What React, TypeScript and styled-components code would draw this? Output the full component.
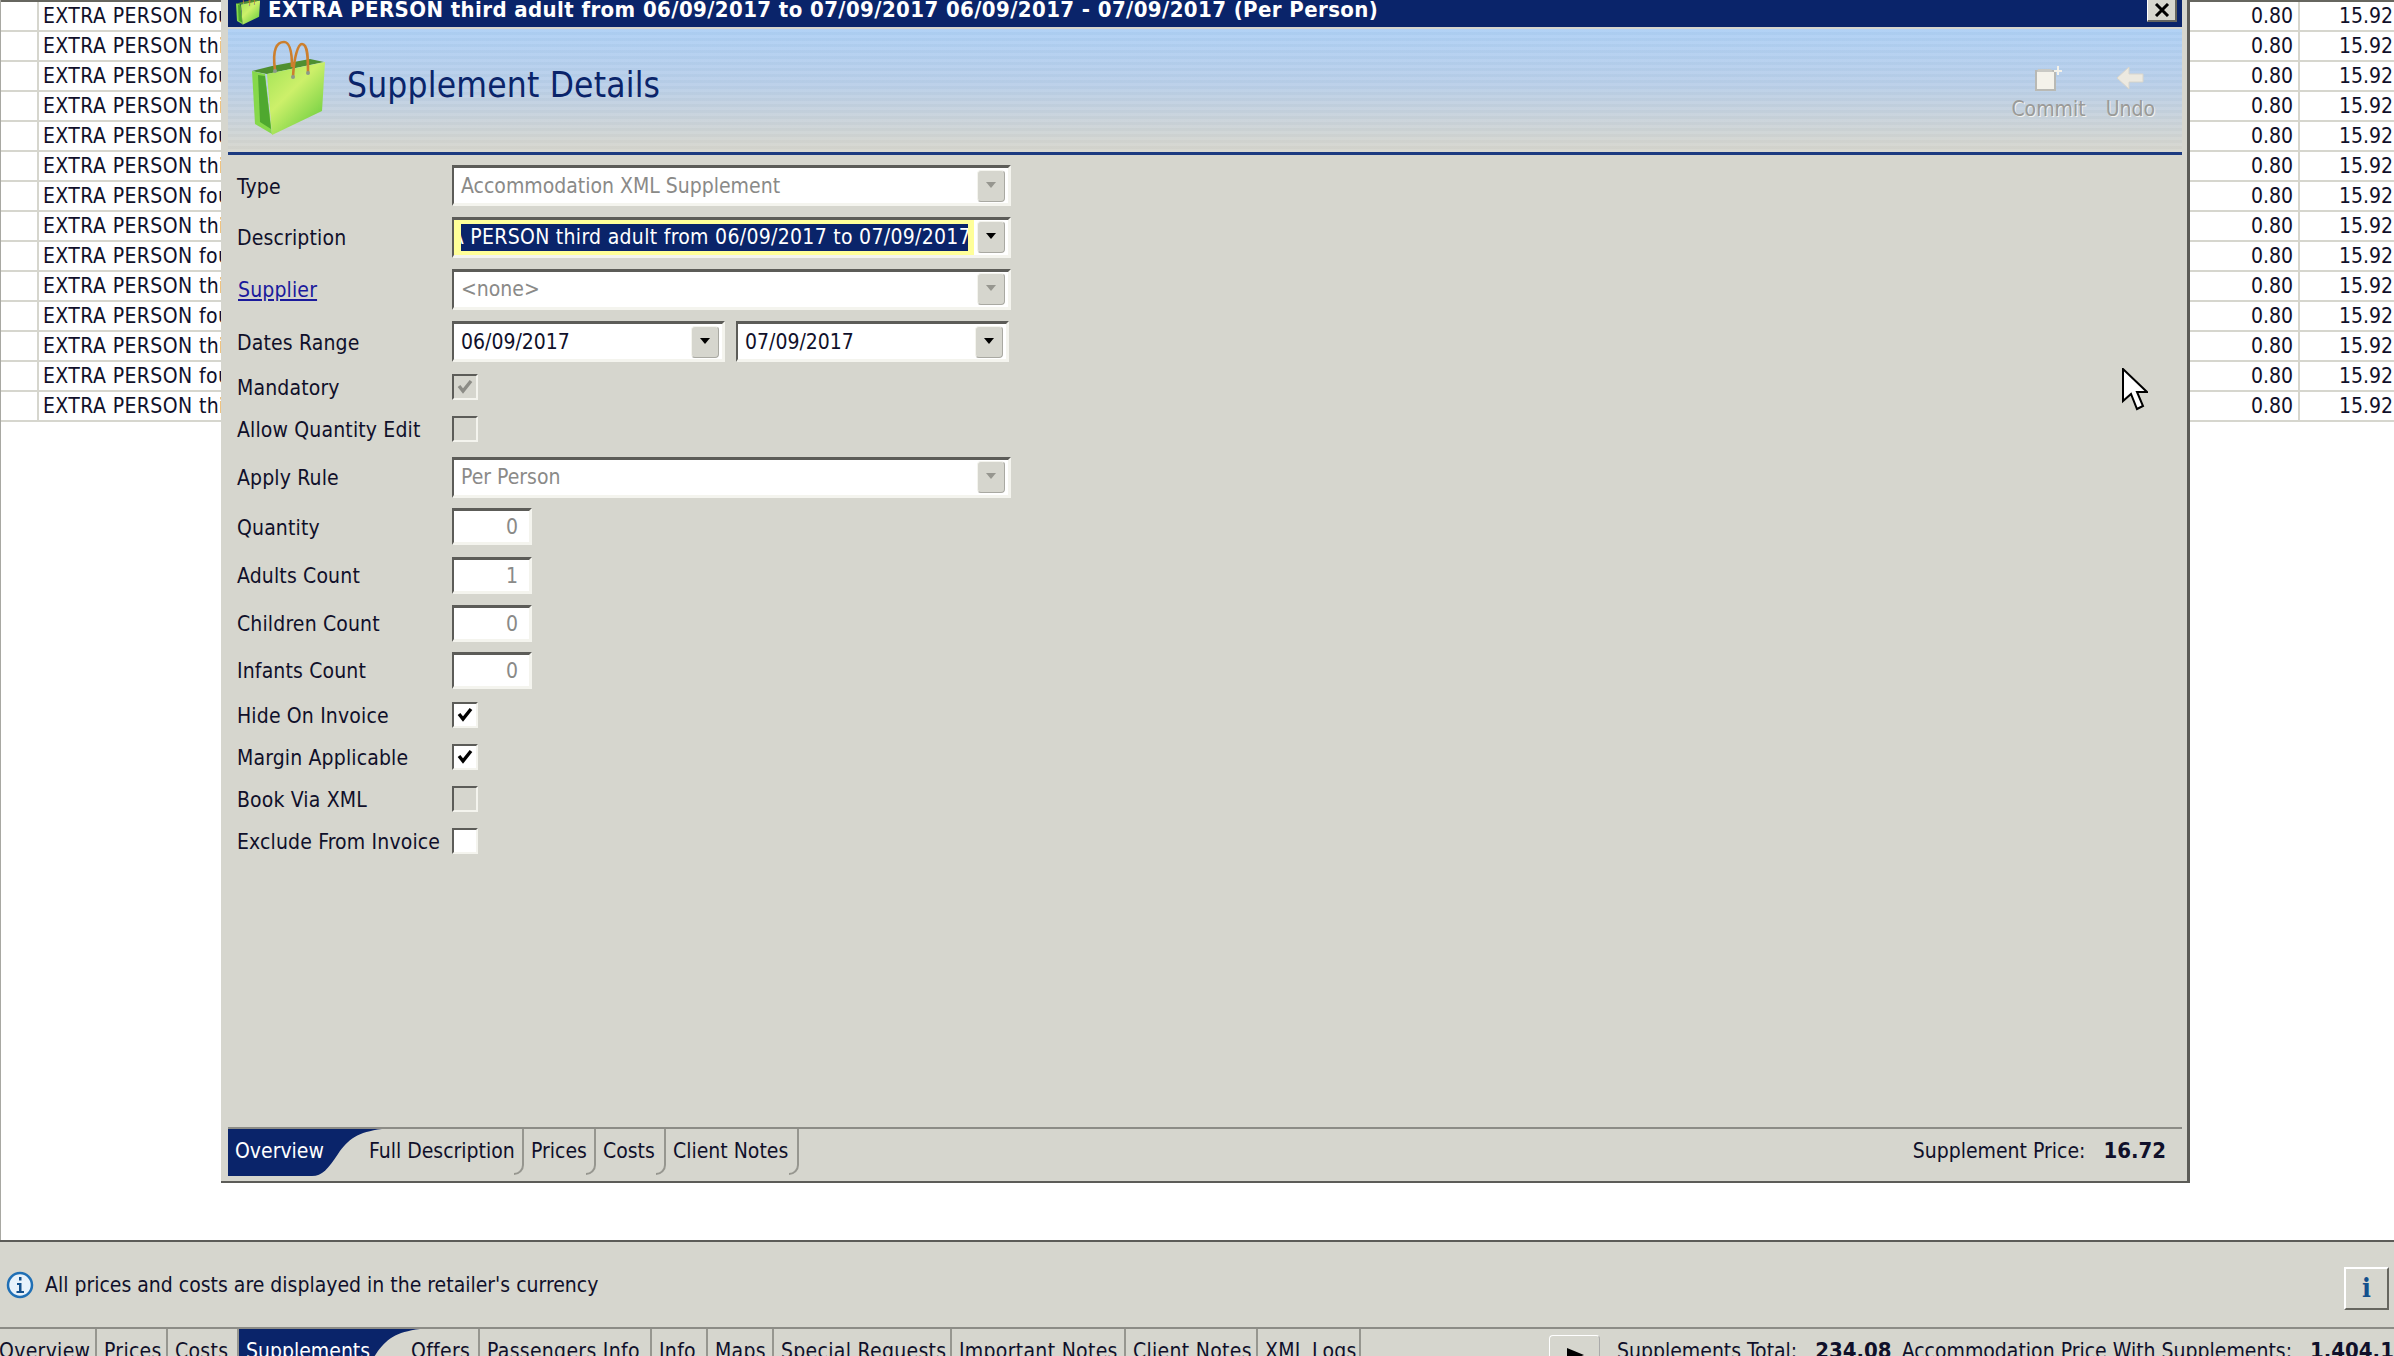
import React from 'react';
import styled, { createGlobalStyle } from 'styled-components';

const GRAY = '#d6d6ce';
const NAVY = '#0a246a';

const rows = Array.from({ length: 14 }, (_, i) =>
  i % 2 === 0
    ? 'EXTRA PERSON fourth adult from 06/09/2017 to 07/09/2017'
    : 'EXTRA PERSON third adult from 06/09/2017 to 07/09/2017',
);

const innerTabs = [
  { label: 'Full Description', w: 162 },
  { label: 'Prices', w: 72 },
  { label: 'Costs', w: 70 },
  { label: 'Client Notes', w: 133 },
];

const BagIcon = ({ size }: { size: number }) => (
  <svg width={(size * 74) / 97} height={size} viewBox="0 0 74 97">
    <defs>
      <linearGradient id="bagFront" x1="0.1" y1="0" x2="0.9" y2="1">
        <stop offset="0" stopColor="#a5e458" />
        <stop offset="0.4" stopColor="#cdf06a" />
        <stop offset="1" stopColor="#5fc93a" />
      </linearGradient>
    </defs>
    <path d="M0 32 L20 27 L58 20 L72 23 L15 35 Z" fill="#4f8f30" />
    <path d="M0 32 L13 35 L20 95 L3 85 Z" fill="#86d84a" />
    <path d="M6 36 L13 37 L19 90 L8 83 Z" fill="#4fa82f" />
    <path d="M15 35 L73 23 L70 72 L20 96 Z" fill="url(#bagFront)" />
    <path d="M23 31 C20 10 25 3 32 3 C38 3 40 14 40 28" fill="none" stroke="#cc7f2e" strokeWidth="2.6" />
    <path d="M41 38 C42 18 46 5 50 5 C56 5 56 20 56 33" fill="none" stroke="#cc7f2e" strokeWidth="2.6" />
    <circle cx="23" cy="32" r="2" fill="#8d9a88" />
    <circle cx="41" cy="38" r="2" fill="#8d9a88" />
    <circle cx="56" cy="34" r="2" fill="#8d9a88" />
  </svg>
);

const CheckMark = ({ color }: { color: string }) => (
  <svg width="18" height="18" viewBox="0 0 18 18">
    <path d="M3 8 L7 13 L15 3" fill="none" stroke={color} strokeWidth="3.4" />
  </svg>
);

const Select = ({ value, disabled = true }: { value: string; disabled?: boolean }) => (
  <SelectBox>
    <SelectValue $disabled={disabled}>{value}</SelectValue>
    <DropButton $disabled={disabled} />
  </SelectBox>
);

const App = () => (
  <Page>
    <GlobalStyle />
    <TableArea>
      <Grid>
        {rows.map((text, i) => (
          <Row key={i}>
            <IndexCell />
            <TextCell>{text}</TextCell>
            <PriceCell>0.80</PriceCell>
            <TotalCell>15.92</TotalCell>
          </Row>
        ))}
      </Grid>

      <Dialog>
        <TitleBar>
          <TitleIcon>
            <BagIcon size={32} />
          </TitleIcon>
          <TitleText>
            EXTRA PERSON third adult from 06/09/2017 to 07/09/2017 06/09/2017 - 07/09/2017 (Per Person)
          </TitleText>
          <CloseButton>
            <svg width="16" height="14" viewBox="0 0 16 14">
              <path d="M2 1 L14 13 M14 1 L2 13" stroke="#000" strokeWidth="3" />
            </svg>
          </CloseButton>
        </TitleBar>

        <Banner>
          <BannerBag>
            <BagIcon size={97} />
          </BannerBag>
          <BannerTitle>Supplement Details</BannerTitle>
          <Toolbar>
            <ToolButton>
              <svg width="30" height="26" viewBox="0 0 30 26">
                <path d="M2 5 H21 V24 H2 Z" fill="#f4f2ea" stroke="#b9b9b4" strokeWidth="2" />
                <path d="M3 6 H19 L17 3 H4 Z" fill="#c9c9c4" />
                <path d="M24 0 V9 M20 5 H28" stroke="#f4f2ea" strokeWidth="2" />
              </svg>
              <ToolLabel>Commit</ToolLabel>
            </ToolButton>
            <ToolButton>
              <svg width="28" height="26" viewBox="0 0 28 26">
                <path d="M1 12 L13 1 V8 H27 V16 H13 V23 Z" fill="#ece9e0" stroke="#d8d5cc" />
              </svg>
              <ToolLabel>Undo</ToolLabel>
            </ToolButton>
          </Toolbar>
        </Banner>

        <Form>
          <FormRow $h={51}>
            <Label>Type</Label>
            <Select value="Accommodation XML Supplement" />
          </FormRow>
          <FormRow $h={52}>
            <Label>Description</Label>
            <SelectBox>
              <FocusField>
                <Selected>
                  <SelectedText>EXTRA PERSON third adult from 06/09/2017 to 07/09/2017</SelectedText>
                </Selected>
              </FocusField>
              <DropButton />
            </SelectBox>
          </FormRow>
          <FormRow $h={52}>
            <LinkLabel>Supplier</LinkLabel>
            <Select value="<none>" />
          </FormRow>
          <FormRow $h={53}>
            <Label>Dates Range</Label>
            <DateBox>
              <SelectValue>06/09/2017</SelectValue>
              <DropButton />
            </DateBox>
            <DateBox>
              <SelectValue>07/09/2017</SelectValue>
              <DropButton />
            </DateBox>
          </FormRow>
          <FormRow $h={38}>
            <Label>Mandatory</Label>
            <CheckBox $disabled>
              <CheckMark color="#8c8c86" />
            </CheckBox>
          </FormRow>
          <FormRow $h={46}>
            <Label>Allow Quantity Edit</Label>
            <CheckBox $disabled />
          </FormRow>
          <FormRow $h={50}>
            <Label>Apply Rule</Label>
            <Select value="Per Person" />
          </FormRow>
          <FormRow $h={49}>
            <Label>Quantity</Label>
            <NumberBox>0</NumberBox>
          </FormRow>
          <FormRow $h={48}>
            <Label>Adults Count</Label>
            <NumberBox>1</NumberBox>
          </FormRow>
          <FormRow $h={48}>
            <Label>Children Count</Label>
            <NumberBox>0</NumberBox>
          </FormRow>
          <FormRow $h={46}>
            <Label>Infants Count</Label>
            <NumberBox>0</NumberBox>
          </FormRow>
          <FormRow $h={44}>
            <Label>Hide On Invoice</Label>
            <CheckBox>
              <CheckMark color="#000" />
            </CheckBox>
          </FormRow>
          <FormRow $h={40}>
            <Label>Margin Applicable</Label>
            <CheckBox>
              <CheckMark color="#000" />
            </CheckBox>
          </FormRow>
          <FormRow $h={44}>
            <Label>Book Via XML</Label>
            <CheckBox $disabled />
          </FormRow>
          <FormRow $h={40}>
            <Label>Exclude From Invoice</Label>
            <CheckBox />
          </FormRow>
        </Form>

        <DialogFooter>
          <ActiveTab $w={154}>Overview</ActiveTab>
          {innerTabs.map((t, i) => (
            <Tab key={t.label} $w={t.w} $overlap={i === 0 ? 20 : 0}>
              {t.label}
            </Tab>
          ))}
          <PriceSummary>
            Supplement Price:<Amount>16.72</Amount>
          </PriceSummary>
        </DialogFooter>
      </Dialog>

      <Cursor>
        <svg width="26" height="44" viewBox="0 0 26 44">
          <path d="M1 1 V33 L9 26 L15 41 L21 38 L15 24 L25 24 Z" fill="#fff" stroke="#000" strokeWidth="2" />
        </svg>
      </Cursor>
    </TableArea>

    <BottomPanel>
      <InfoRow>
        <svg width="28" height="28" viewBox="0 0 28 28">
          <circle cx="14" cy="14" r="12" fill="#e8f2fb" stroke="#1f6fb5" strokeWidth="2.5" />
          <path d="M11 12 H15.5 V20 H18 V22 H10.5 V20 H13 V14 H11 Z M13 6 H15.5 V9.5 H13 Z" fill="#14508c" />
        </svg>
        <InfoText>All prices and costs are displayed in the retailer&apos;s currency</InfoText>
        <InfoButton>i</InfoButton>
      </InfoRow>
      <BottomStrip>
        <StripTab $w={105} $overlap={8}>Overview</StripTab>
        <StripTab $w={71}>Prices</StripTab>
        <StripTab $w={71}>Costs</StripTab>
        <ActiveTab $w={181}>Supplements</ActiveTab>
        <StripTab $w={76} $overlap={16}>Offers</StripTab>
        <StripTab $w={172}>Passengers Info</StripTab>
        <StripTab $w={56}>Info</StripTab>
        <StripTab $w={66}>Maps</StripTab>
        <StripTab $w={178}>Special Requests</StripTab>
        <StripTab $w={174}>Important Notes</StripTab>
        <StripTab $w={132}>Client Notes</StripTab>
        <StripTab $w={103}>XML Logs</StripTab>
        <PlayButton>
          <svg width="20" height="16" viewBox="0 0 20 16">
            <path d="M2 1 L19 8 L2 15 Z" fill="#000" />
          </svg>
        </PlayButton>
        <Totals>
          Supplements Total:<Amount>234.08</Amount>
          <TotalsLabel>Accommodation Price With Supplements:</TotalsLabel>
          <Amount>1,404.16</Amount>
        </Totals>
      </BottomStrip>
    </BottomPanel>
  </Page>
);

const GlobalStyle = createGlobalStyle`
  html, body {
    margin: 0;
    padding: 0;
    background: #fff;
  }
  * {
    box-sizing: border-box;
  }
`;

const Page = styled.div`
  width: 2394px;
  height: 1356px;
  overflow: hidden;
  display: flex;
  flex-direction: column;
  background: #fff;
  color: #10102a;
  font-family: 'DejaVu Sans Condensed', 'DejaVu Sans', sans-serif;
  font-stretch: condensed;
  font-size: 21px;
`;

const TableArea = styled.div`
  position: relative;
  height: 1240px;
  flex: none;
  border-left: 1px solid #a8a8a2;
`;

const Grid = styled.div`
  border-top: 2px solid #66665f;
`;

const Row = styled.div`
  display: flex;
  height: 30px;
  border-bottom: 2px solid ${GRAY};
  line-height: 29px;
  white-space: nowrap;
`;

const IndexCell = styled.div`
  width: 38px;
  flex: none;
  border-right: 2px solid ${GRAY};
`;

const TextCell = styled.div`
  flex: 1;
  padding-left: 4px;
  letter-spacing: 0.4px;
  overflow: hidden;
`;

const PriceCell = styled.div`
  width: 110px;
  flex: none;
  padding-right: 5px;
  text-align: right;
  border-right: 2px solid ${GRAY};
`;

const TotalCell = styled.div`
  width: 94px;
  flex: none;
  padding-right: 1px;
  text-align: right;
`;

const Dialog = styled.div`
  position: absolute;
  left: 220px;
  top: 0;
  width: 1969px;
  height: 1183px;
  display: flex;
  flex-direction: column;
  padding: 0 5px 6px 7px;
  background: ${GRAY};
  border-right: 3px solid #5c5c58;
  border-bottom: 2px solid #5c5c58;
`;

const TitleBar = styled.div`
  height: 27px;
  flex: none;
  display: flex;
  align-items: flex-start;
  background: ${NAVY};
  overflow: hidden;
`;

const TitleIcon = styled.div`
  width: 40px;
  flex: none;
  padding-left: 8px;
  margin-top: -7px;
`;

const TitleText = styled.div`
  flex: 1;
  margin-top: -4px;
  font-weight: 700;
  font-size: 22px;
  letter-spacing: 0.4px;
  line-height: 28px;
  color: #fff;
  white-space: nowrap;
`;

const CloseButton = styled.div`
  width: 30px;
  height: 22px;
  margin-right: 5px;
  flex: none;
  display: flex;
  align-items: center;
  justify-content: center;
  background: ${GRAY};
  border-right: 2px solid #66665f;
  border-bottom: 2px solid #66665f;
  border-left: 1px solid #fff;
`;

const Banner = styled.div`
  height: 126px;
  margin-top: 2px;
  flex: none;
  display: flex;
  align-items: center;
  background:
    repeating-linear-gradient(rgba(255, 255, 255, 0.05) 0 3px, rgba(0, 0, 0, 0.015) 3px 6px),
    linear-gradient(#aed0f5 0%, #b9cfe9 45%, #d2d5d2 90%, ${GRAY} 100%);
  border-bottom: 3px solid #1c3a80;
  background-clip: padding-box;
`;

const BannerBag = styled.div`
  width: 119px;
  flex: none;
  display: flex;
  padding-left: 24px;
  padding-bottom: 6px;
`;

const BannerTitle = styled.div`
  flex: 1;
  padding-bottom: 12px;
  font-size: 35px;
  letter-spacing: 0.2px;
  color: ${NAVY};
`;

const Toolbar = styled.div`
  display: flex;
  gap: 20px;
  padding-right: 27px;
  padding-top: 6px;
`;

const ToolButton = styled.div`
  display: flex;
  flex-direction: column;
  align-items: center;
  gap: 4px;
`;

const ToolLabel = styled.div`
  color: #9a9a98;
  text-shadow: 1px 1px 0 #f2f2ee;
  line-height: 26px;
`;

const Form = styled.div`
  flex: 1;
  padding-top: 5px;
  display: flex;
  flex-direction: column;
`;

const FormRow = styled.div<{ $h: number }>`
  height: ${(p) => p.$h}px;
  flex: none;
  display: flex;
  align-items: center;
`;

const Label = styled.div`
  width: 224px;
  flex: none;
  padding: 2px 0 0 9px;
  letter-spacing: 0.15px;
`;

const LinkLabel = styled(Label)`
  padding-left: 10px;
  color: #1a1a9c;
  text-decoration: underline;
`;

const sunken = `
  border-style: solid;
  border-width: 3px 3px 3px 2px;
  border-color: #5c5c58 #f4f4ee #f4f4ee #5c5c58;
  background: #fff;
`;

const SelectBox = styled.div`
  ${sunken}
  width: 559px;
  height: 41px;
  display: flex;
  align-items: center;
  padding-right: 3px;
`;

const DateBox = styled(SelectBox)`
  width: 273px;
  margin-right: 11px;
`;

const SelectValue = styled.div<{ $disabled?: boolean }>`
  flex: 1;
  padding-left: 7px;
  color: ${(p) => (p.$disabled ? '#8a8a88' : '#10102a')};
  white-space: nowrap;
`;

const FocusField = styled.div`
  flex: 1;
  align-self: stretch;
  padding: 4px 6px 4px 7px;
  margin-right: 3px;
  background: #ffff99;
  min-width: 0;
`;

const Selected = styled.div`
  height: 100%;
  display: flex;
  align-items: center;
  justify-content: flex-end;
  overflow: hidden;
  white-space: nowrap;
  background: ${NAVY};
  color: #fff;
`;

const SelectedText = styled.span`
  flex: none;
  letter-spacing: 0.3px;
  margin-right: -3px;
`;

const DropButton = styled.div<{ $disabled?: boolean }>`
  position: relative;
  width: 28px;
  height: 32px;
  flex: none;
  background: ${GRAY};
  border: 1px solid #a9a9a2;
  border-top-color: #f4f4ee;
  border-left-color: #f4f4ee;
  border-radius: 4px;
  &::after {
    content: '';
    position: absolute;
    left: 8px;
    top: 11px;
    border-style: solid;
    border-width: 6px 5px 0 5px;
    border-color: ${(p) => (p.$disabled ? '#96968f' : '#000')} transparent transparent transparent;
  }
`;

const CheckBox = styled.div<{ $disabled?: boolean }>`
  width: 26px;
  height: 26px;
  flex: none;
  display: flex;
  align-items: center;
  justify-content: center;
  border-style: solid;
  border-width: 2px;
  border-color: #5c5c58 #f4f4ee #f4f4ee #5c5c58;
  background: ${(p) => (p.$disabled ? GRAY : '#fff')};
`;

const NumberBox = styled.div`
  ${sunken}
  width: 80px;
  height: 37px;
  padding-right: 11px;
  text-align: right;
  line-height: 32px;
  color: #8a8a88;
`;

const DialogFooter = styled.div`
  height: 48px;
  flex: none;
  display: flex;
  border-top: 2px solid #8c8c86;
`;

const ActiveTab = styled.div<{ $w: number }>`
  width: ${(p) => p.$w}px;
  height: 47px;
  flex: none;
  padding-left: 7px;
  line-height: 44px;
  background: ${NAVY};
  color: #fff;
  clip-path: path('M0 0 H${(p) => p.$w} C${(p) => p.$w - 24} 3 ${(p) => p.$w - 34} 10 ${(p) => p.$w - 44} 25 C${(p) => p.$w - 54} 40 ${(p) => p.$w - 60} 47 ${(p) => p.$w - 70} 47 H0 Z');
`;

const Tab = styled.div<{ $w: number; $overlap?: number }>`
  position: relative;
  width: ${(p) => p.$w}px;
  height: 47px;
  flex: none;
  margin-left: ${(p) => -(p.$overlap ?? 0)}px;
  padding-left: 7px;
  line-height: 44px;
  white-space: nowrap;
  &::before {
    content: '';
    position: absolute;
    right: 0;
    top: 0;
    height: 34px;
    border-right: 2px solid #96968f;
  }
  &::after {
    content: '';
    position: absolute;
    right: 0;
    top: 34px;
    width: 8px;
    height: 10px;
    border-right: 2px solid #96968f;
    border-bottom: 2px solid #96968f;
    border-bottom-right-radius: 10px;
  }
`;

const StripTab = styled(Tab)`
  letter-spacing: 0.3px;
`;

const PriceSummary = styled.div`
  margin-left: auto;
  padding: 6px 16px 0 0;
  line-height: 32px;
  white-space: nowrap;
`;

const Amount = styled.b`
  margin-left: 18px;
  font-weight: 700;
  font-size: 22px;
`;

const Cursor = styled.div`
  position: absolute;
  left: 2121px;
  top: 368px;
  line-height: 0;
`;

const BottomPanel = styled.div`
  flex: 1;
  min-height: 0;
  background: ${GRAY};
  border-top: 2px solid #5c5c58;
`;

const InfoRow = styled.div`
  height: 85px;
  display: flex;
  align-items: center;
  padding: 0 5px 0 6px;
`;

const InfoText = styled.div`
  flex: 1;
  padding-left: 11px;
`;

const InfoButton = styled.div`
  width: 45px;
  height: 43px;
  margin-top: 8px;
  text-align: center;
  font-family: 'DejaVu Serif', serif;
  font-weight: 700;
  font-size: 26px;
  line-height: 38px;
  color: #14508c;
  border-style: solid;
  border-width: 2px;
  border-color: #fff #66665f #66665f #fff;
`;

const BottomStrip = styled.div`
  height: 48px;
  display: flex;
  border-top: 2px solid #8c8c86;
  white-space: nowrap;
`;

const PlayButton = styled.div`
  width: 51px;
  height: 40px;
  flex: none;
  margin: 6px 0 0 188px;
  display: flex;
  align-items: center;
  justify-content: center;
  border: 1px solid #aaa;
  border-top-color: #fff;
  border-left-color: #fff;
  border-radius: 4px;
`;

const Totals = styled.div`
  margin-left: 17px;
  line-height: 44px;
`;

const TotalsLabel = styled.span`
  margin-left: 10px;
`;

export default App;
